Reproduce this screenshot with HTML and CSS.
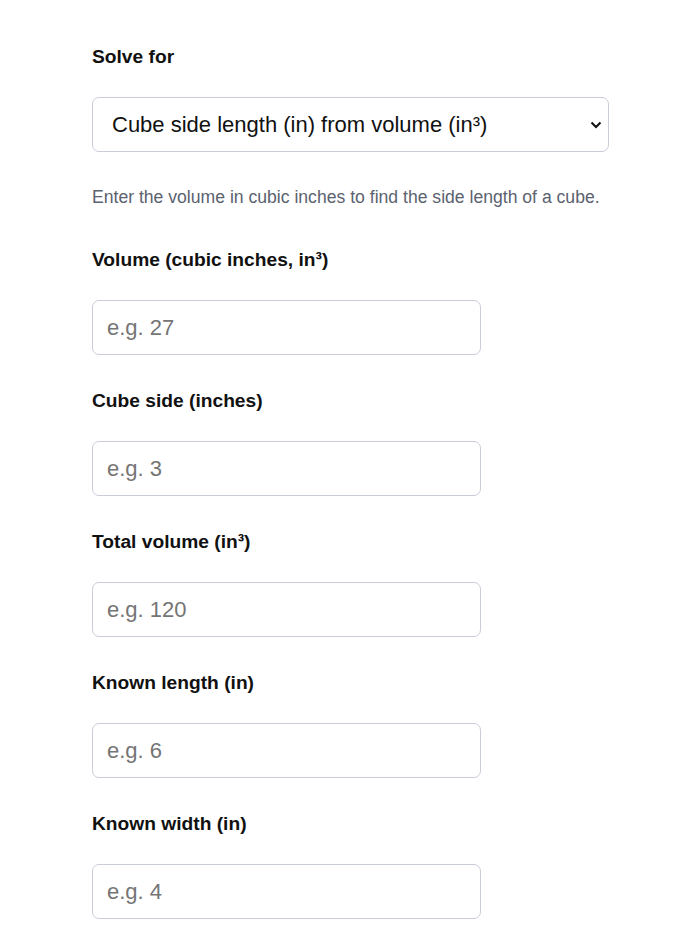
FILE: index.html
```html
<!DOCTYPE html>
<html lang="en">
<head>
  <meta charset="UTF-8">
  <meta name="viewport" content="width=device-width, initial-scale=1.0">
  <title>Cube Side Calculator</title>
  <link rel="stylesheet" href="styles.css">
</head>
<body>
  <div class="calc">
    <div class="field">
      <label for="mode">Solve for</label>
      <select id="mode" class="select">
        <option>Cube side length (in) from volume (in³)</option>
      </select>
    </div>

    <p class="hint">Enter the volume in cubic inches to find the side length of a cube.</p>

    <div class="field">
      <label for="volume">Volume (cubic inches, in³)</label>
      <input type="text" id="volume" class="input" placeholder="e.g. 27">
    </div>

    <div class="field">
      <label for="side">Cube side (inches)</label>
      <input type="text" id="side" class="input" placeholder="e.g. 3">
    </div>

    <div class="field">
      <label for="total">Total volume (in³)</label>
      <input type="text" id="total" class="input" placeholder="e.g. 120">
    </div>

    <div class="field">
      <label for="length">Known length (in)</label>
      <input type="text" id="length" class="input" placeholder="e.g. 6">
    </div>

    <div class="field">
      <label for="width">Known width (in)</label>
      <input type="text" id="width" class="input" placeholder="e.g. 4">
    </div>
  </div>
</body>
</html>
```

FILE: styles.css
```css
body {
  margin: 0;
  font-family: "Liberation Sans", Arial, sans-serif;
  background: #fff;
  color: #111;
}

.calc {
  width: 517px;
  padding: 46px 0 0 92px;
}

.field {
  margin-bottom: 35px;
}

.field label {
  display: block;
  font-size: 19.2px;
  font-weight: bold;
  line-height: 22px;
  margin-bottom: 29px;
  color: #111;
}

.select,
.input {
  box-sizing: border-box;
  height: 55px;
  border: 1px solid #c9cdd8;
  border-radius: 7px;
  background: #fff;
  font-family: "Liberation Sans", Arial, sans-serif;
  font-size: 22px;
  color: #111;
  padding: 0 14px;
  outline: none;
}

.select {
  display: block;
  width: 517px;
  padding-left: 19px;
  appearance: none;
  background-image: url("data:image/svg+xml,%3Csvg xmlns='http://www.w3.org/2000/svg' width='12' height='8' viewBox='0 0 12 8'%3E%3Cpath d='M1.5 1.5 6 6l4.5-4.5' fill='none' stroke='%23111' stroke-width='2'/%3E%3C/svg%3E");
  background-repeat: no-repeat;
  background-position: right 6px center;
}

.input {
  display: block;
  width: 389px;
}

.input::placeholder {
  color: #757575;
}

.hint {
  margin: 1px 0 42px;
  font-size: 17.6px;
  line-height: 20px;
  color: #5b6270;
}
```
